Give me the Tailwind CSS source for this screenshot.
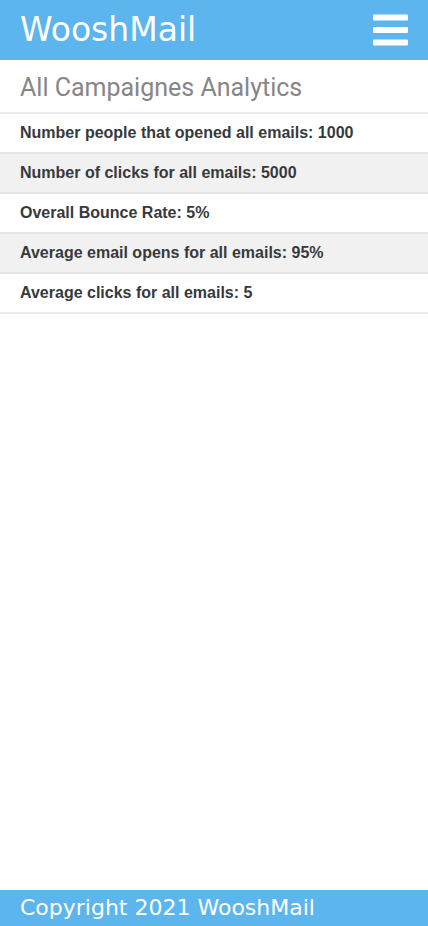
<!DOCTYPE html>
<html lang="en">
<head>
<meta charset="utf-8">
<meta name="viewport" content="width=device-width, initial-scale=1">
<title>WooshMail</title>
<script src="https://cdn.jsdelivr.net/npm/@tailwindcss/browser@4"></script>
</head>
<body class="flex min-h-screen flex-col bg-white font-['Liberation_Sans',Arial,sans-serif]">
<header class="flex h-15 items-center justify-between bg-[#5cb5ec] px-5 text-white">
  <a href="#" class="font-['Chalkduster','DejaVu_Sans',sans-serif] text-[33px] leading-10">WooshMail</a>
  <button type="button" aria-label="Open menu">
    <svg class="block h-8 w-[35px]" viewBox="0 0 35 32" fill="currentColor" aria-hidden="true">
      <rect x="0" y="0.4" width="35" height="6.2" rx="1"/>
      <rect x="0" y="12.9" width="35" height="6.2" rx="1"/>
      <rect x="0" y="25.4" width="35" height="6.2" rx="1"/>
    </svg>
  </button>
</header>
<main class="flex-1">
  <h1 class="px-5 pt-3 pb-2 font-[Roboto,sans-serif] text-[25px] leading-8 text-[#868686]">All Campaignes Analytics</h1>
  <ul class="border-b-2 border-[#ebebeb] text-base font-bold text-[#37393c]">
    <li class="flex h-10 items-center border-t-2 border-[#ebebeb] px-5">Number people that opened all emails: 1000</li>
    <li class="flex h-10 items-center border-t-2 border-[#e5e5e5] bg-[#f1f1f1] px-5">Number of clicks for all emails: 5000</li>
    <li class="flex h-10 items-center border-t-2 border-[#e5e5e5] px-5">Overall Bounce Rate: 5%</li>
    <li class="flex h-10 items-center border-t-2 border-[#e5e5e5] bg-[#f1f1f1] px-5">Average email opens for all emails: 95%</li>
    <li class="flex h-10 items-center border-t-2 border-[#e5e5e5] px-5">Average clicks for all emails: 5</li>
  </ul>
</main>
<footer class="flex h-9 items-center bg-[#5cb5ec] px-5 font-['Chalkduster','DejaVu_Sans',sans-serif] text-[22px] leading-8 text-white">Copyright 2021 WooshMail</footer>
</body>
</html>
